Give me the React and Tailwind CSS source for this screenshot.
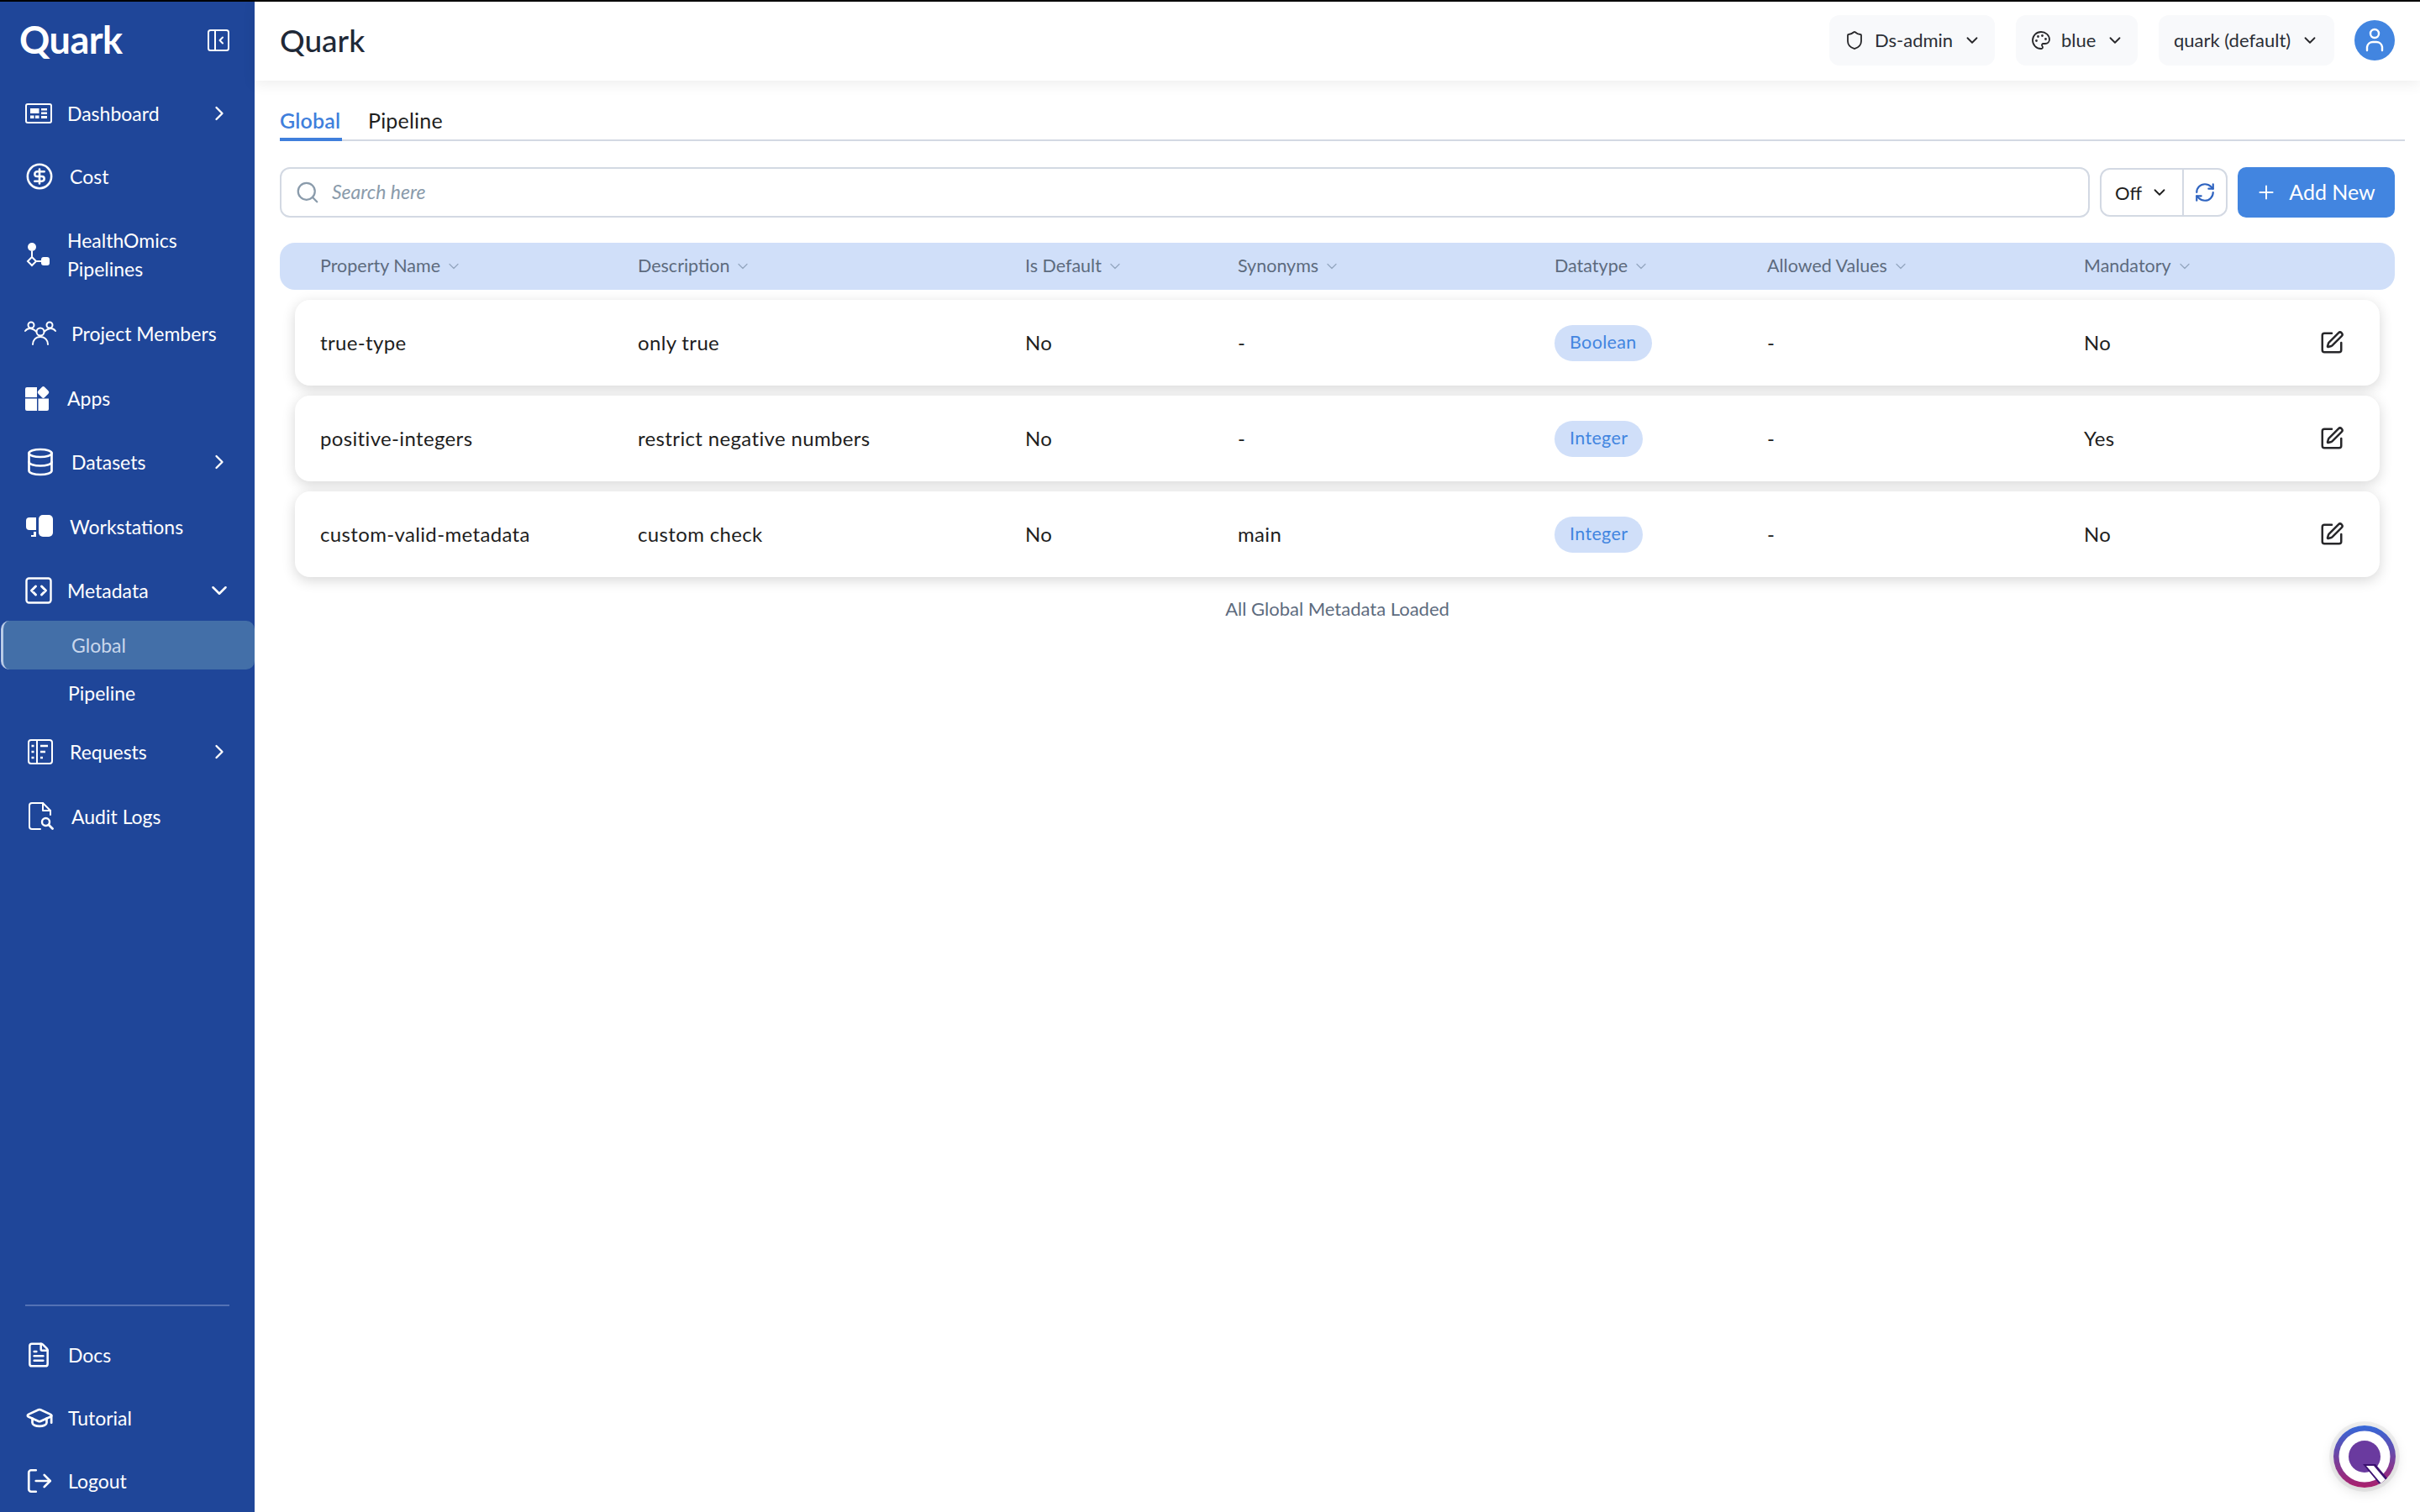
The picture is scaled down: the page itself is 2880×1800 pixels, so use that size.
import {
  ChevronDown, ChevronRight, CircleDollarSign, Database, FileText, GraduationCap, LogOut,
  Palette, Plus, RefreshCw, Search, Shield, SquarePen,
} from 'lucide-react';

const DashboardIcon = () => (
  <svg width="32" height="24" viewBox="0 0 32 24" fill="none" className="text-white">
    <rect x="1" y="1" width="30" height="22" rx="2" stroke="currentColor" strokeWidth="2" />
    <path d="M6 6h10.500v6H6zM6 14.500h4.500v3.500H6zM12 14.500h4.500v3.500H12zM19 6h7v2.500h-7zM19 10.500h7v2.500h-7zM19 15h7v3h-7z" fill="currentColor" />
  </svg>
);

const PipelineIcon = () => (
  <svg width="32" height="32" viewBox="0 0 32 32" fill="none">
    <circle cx="8" cy="7" r="5" fill="white" />
    <path d="M8 12v7M13 24h6" stroke="white" strokeWidth="2" />
    <path d="M8 19l5 5-5 5-5-5z" stroke="white" strokeWidth="2" />
    <rect x="19" y="19" width="10" height="10" rx="3" fill="white" />
  </svg>
);

const MembersIcon = () => (
  <svg width="38" height="30" viewBox="0 0 38 30" fill="none" stroke="white" strokeWidth="2" strokeLinecap="round">
    <circle cx="8" cy="5" r="3.500" />
    <circle cx="30" cy="5" r="3.500" />
    <circle cx="19" cy="13" r="4.500" />
    <path d="M1 12c2-2.500 5-3.500 8-2.500 2 .7 3.500 1.700 5 3M37 12c-2-2.500-5-3.500-8-2.500-2 .7-3.500 1.700-5 3" />
    <path d="M10 28c0-5 3.500-9 9-9s9 4 9 9" />
  </svg>
);

const AppsIcon = () => (
  <svg width="30" height="30" viewBox="0 0 30 30" fill="white">
    <path d="M2 2h12v12H0V4a2 2 0 0 1 2-2zM0 15.500h14V30H2a2 2 0 0 1-2-2zM15.500 15.500H28V28a2 2 0 0 1-2 2H15.500z" />
    <rect x="16" y="2.500" width="11" height="11" rx="2.500" transform="rotate(45 21.500 8)" />
  </svg>
);

const WorkstationIcon = () => (
  <svg width="32" height="28" viewBox="0 0 32 28" fill="white">
    <rect x="15" y="0" width="17" height="26" rx="5" />
    <path d="M4 3h8v15H4a4 4 0 0 1-4-4V7a4 4 0 0 1 4-4z" />
    <rect x="9" y="20" width="3" height="4" />
    <rect x="6" y="24" width="6" height="2" />
  </svg>
);

const MetadataIcon = () => (
  <svg width="32" height="32" viewBox="0 0 32 32" fill="none" stroke="white" strokeWidth="2.400" strokeLinecap="round" strokeLinejoin="round">
    <rect x="1.500" y="1.500" width="29" height="29" rx="3" />
    <path d="M12.500 11l-5 5 5 5M19.500 11l5 5-5 5" strokeWidth="3" />
  </svg>
);

const RequestsIcon = () => (
  <svg width="30" height="30" viewBox="0 0 30 30" fill="none" stroke="white" strokeWidth="2">
    <rect x="1" y="1" width="28" height="28" rx="3" />
    <path d="M11 1v28" />
    <path d="M4.500 8h3M4.500 15h3M4.500 22h3M15 8h9M15 15h6M15 22h3" strokeWidth="2.500" />
  </svg>
);

const AuditIcon = () => (
  <svg width="30" height="34" viewBox="0 0 30 34" fill="none" stroke="white" strokeWidth="2" strokeLinecap="round" strokeLinejoin="round">
    <path d="M14 32H4a3 3 0 0 1-3-3V4a3 3 0 0 1 3-3h13l9 9v5" />
    <path d="M17 1v9h9" />
    <circle cx="20.500" cy="23.500" r="4.500" strokeWidth="2.400" />
    <path d="M24 27l4.500 4.500" strokeWidth="2.800" />
  </svg>
);

const CollapseIcon = () => (
  <svg width="26" height="26" viewBox="0 0 26 26" fill="none" stroke="white" strokeWidth="2" strokeLinecap="round" strokeLinejoin="round">
    <rect x="1" y="1" width="24" height="24" rx="2.500" />
    <path d="M9 1v24" />
    <path d="M18 9.500l-3.500 3.500 3.500 3.500" />
  </svg>
);

const UserIcon = () => (
  <svg width="24" height="32" viewBox="0 0 24 32" fill="none" stroke="white" strokeWidth="2.400" strokeLinecap="round">
    <circle cx="12" cy="8" r="5" />
    <path d="M3 28v-4a7 7 0 0 1 7-6h4a7 7 0 0 1 7 6v4" />
  </svg>
);

const QuarkBubble = () => (
  <svg width="74" height="74" viewBox="0 0 74 74">
    <defs>
      <linearGradient id="qg" x1="0" y1="0" x2="0" y2="1">
        <stop offset="0" stopColor="#3569d9" />
        <stop offset="1" stopColor="#ab1f6c" />
      </linearGradient>
      <clipPath id="qc"><circle cx="37" cy="37" r="37" /></clipPath>
    </defs>
    <circle cx="37" cy="37" r="37" fill="url(#qg)" />
    <circle cx="37" cy="37" r="30.500" fill="white" />
    <circle cx="37" cy="37" r="19" fill="#6a3a9f" />
    <g clipPath="url(#qc)">
      <path d="M35 46h15l20 24h-15z" fill="#3b1170" />
      <path d="M39 48h9l21 25h-9z" fill="white" />
    </g>
  </svg>
);

const NAV_TOP = [
  { label: 'Dashboard', icon: <DashboardIcon />, height: 'h-[76px]', iconBox: 'w-[32px] ml-[30px]', gap: 'ml-[18px]', arrow: true },
  { label: 'Cost', icon: <CircleDollarSign size={34} strokeWidth={1.8} color="white" />, height: 'h-[74px]', iconBox: 'w-[34px] ml-[30px]', gap: 'ml-[19px]' },
  { label: 'HealthOmics Pipelines', icon: <PipelineIcon />, height: 'h-[112px]', iconBox: 'w-[32px] ml-[30px]', gap: 'ml-[18px]' },
  { label: 'Project Members', icon: <MembersIcon />, height: 'h-[76px]', iconBox: 'w-[38px] ml-[29px]', gap: 'ml-[18px]' },
  { label: 'Apps', icon: <AppsIcon />, height: 'h-[78px]', iconBox: 'w-[30px] ml-[30px]', gap: 'ml-[20px]' },
  { label: 'Datasets', icon: <Database size={36} strokeWidth={1.8} color="white" />, height: 'h-[74px]', iconBox: 'w-[36px] ml-[30px]', gap: 'ml-[19px]', arrow: true },
  { label: 'Workstations', icon: <WorkstationIcon />, height: 'h-[79px]', iconBox: 'w-[32px] ml-[31px]', gap: 'ml-[20px]' },
  { label: 'Metadata', icon: <MetadataIcon />, height: 'h-[73px]', iconBox: 'w-[32px] ml-[30px]', gap: 'ml-[18px]', open: true },
];

const NAV_AFTER = [
  { label: 'Requests', icon: <RequestsIcon />, height: 'h-[84px]', iconBox: 'w-[30px] ml-[33px]', gap: 'ml-[20px]', arrow: true },
  { label: 'Audit Logs', icon: <AuditIcon />, height: 'h-[70px]', iconBox: 'w-[30px] ml-[34px]', gap: 'ml-[21px]' },
];

const NAV_BOTTOM = [
  { label: 'Docs', icon: <FileText size={32} strokeWidth={1.9} color="white" />, height: 'h-[75px]', iconBox: 'w-[32px] ml-[30px]', gap: 'ml-[19px]' },
  { label: 'Tutorial', icon: <GraduationCap size={34} strokeWidth={1.9} color="white" />, height: 'h-[75px]', iconBox: 'w-[34px] ml-[30px]', gap: 'ml-[17px]' },
  { label: 'Logout', icon: <LogOut size={34} strokeWidth={1.9} color="white" />, height: 'h-[75px]', iconBox: 'w-[34px] ml-[30px]', gap: 'ml-[17px]' },
];

const COLUMNS = ['Property Name', 'Description', 'Is Default', 'Synonyms', 'Datatype', 'Allowed Values', 'Mandatory'];

const ROWS = [
  { name: 'true-type', description: 'only true', isDefault: 'No', synonyms: '-', datatype: 'Boolean', allowed: '-', mandatory: 'No' },
  { name: 'positive-integers', description: 'restrict negative numbers', isDefault: 'No', synonyms: '-', datatype: 'Integer', allowed: '-', mandatory: 'Yes' },
  { name: 'custom-valid-metadata', description: 'custom check', isDefault: 'No', synonyms: 'main', datatype: 'Integer', allowed: '-', mandatory: 'No' },
];

const GRID = 'grid grid-cols-[378px_461px_253px_377px_253px_377px_1fr] items-center';

function NavItem({ item }) {
  return (
    <div className={`flex items-center shrink-0 text-white text-[23px] leading-[34px] ${item.height}`}>
      <div className={`flex justify-center shrink-0 ${item.iconBox}`}>{item.icon}</div>
      <span className={`w-[150px] grow ${item.gap}`}>{item.label}</span>
      {item.arrow && <ChevronRight size={28} strokeWidth={2} className="mr-[28px] shrink-0" />}
      {item.open && <ChevronDown size={30} strokeWidth={2} className="mr-[27px] shrink-0" />}
    </div>
  );
}

function HeaderPill({ icon, label, className }) {
  return (
    <div className={`flex items-center h-[60px] rounded-[12px] bg-[#f8f9fb] text-[22px] text-[#2b2f36] ${className}`}>
      {icon}
      <span>{label}</span>
      <ChevronDown size={22} strokeWidth={2} className="text-[#27272a]" />
    </div>
  );
}

export default function App() {
  return (
    <div className="flex flex-col w-[2880px] h-[1800px] overflow-hidden bg-white font-['Lato',sans-serif] relative">
      <div className="h-[2px] bg-black shrink-0" />
      <div className="flex grow min-h-0">
        <aside className="flex flex-col w-[303px] shrink-0 bg-[#1f4699]">
          <div className="flex items-center justify-between h-[95px] pl-[23px] pr-[30px] pb-[3px] shrink-0">
            <span className="text-[45px] font-bold text-white tracking-[-0.5px]">Quark</span>
            <CollapseIcon />
          </div>
          {NAV_TOP.map(item => <NavItem key={item.label} item={item} />)}
          <div className="flex items-center h-[58px] shrink-0 ml-[1px] pl-[81px] rounded-[10px] border-l-[3px] border-[#b9cbe6] bg-[#436fa8] text-[23px] text-[#c9d7ec]">
            Global
          </div>
          <div className="flex items-center h-[56px] shrink-0 pl-[81px] text-[23px] text-white">Pipeline</div>
          {NAV_AFTER.map(item => <NavItem key={item.label} item={item} />)}
          <div className="mt-auto">
            <div className="h-[2px] mx-[30px] mb-[20px] bg-[#5472b5]" />
            {NAV_BOTTOM.map(item => <NavItem key={item.label} item={item} />)}
          </div>
        </aside>

        <main className="flex flex-col grow min-w-0">
          <header className="flex items-center justify-between h-[94px] shrink-0 pl-[30px] pr-[30px] pb-[3px] shadow-[0_4px_16px_rgba(0,0,0,0.07)]">
            <h1 className="text-[37px] leading-none font-medium text-[#1f2937]">Quark</h1>
            <div className="flex items-center">
              <HeaderPill
                icon={<Shield size={24} strokeWidth={1.8} className="text-[#27272a]" />}
                label="Ds-admin"
                className="w-[197px] pl-[18px] gap-[12px]"
              />
              <HeaderPill
                icon={<Palette size={24} strokeWidth={1.8} className="text-[#27272a]" />}
                label="blue"
                className="w-[145px] ml-[25px] pl-[18px] gap-[12px]"
              />
              <HeaderPill label="quark (default)" className="w-[209px] ml-[25px] pl-[18px] gap-[12px]" />
              <div className="flex items-center justify-center w-[48px] h-[48px] ml-[24px] rounded-full bg-[#4285e0]">
                <UserIcon />
              </div>
            </div>
          </header>

          <div className="flex items-end gap-[31px] h-[72px] shrink-0 ml-[30px] mr-[18px] border-b-2 border-[#d3d9e3] text-[25px] tracking-[0.2px]">
            <div className="flex items-center w-[74px] h-[45px] -mb-[2px] border-b-4 border-[#3f7fdc] text-[#3f7fdc] font-semibold">Global</div>
            <div className="flex items-center h-[45px] -mb-[2px] border-b-4 border-transparent text-[#1e1e1e]">Pipeline</div>
          </div>

          <div className="flex flex-col grow mx-[30px] min-h-0">
            <div className="flex items-center mt-[31px] shrink-0">
              <div className="flex items-center grow h-[60px] pl-[16px] pb-[1px] rounded-[12px] border-2 border-[#d3d9e3]">
                <Search size={30} strokeWidth={1.8} className="text-[#8a9bab]" />
                <span className="ml-[14px] text-[23px] italic text-[#8a9bab]">Search here</span>
              </div>
              <div className="flex items-center h-[58px] ml-[12px] w-[152px] shrink-0 rounded-[12px] border-2 border-[#d3d9e3]">
                <div className="flex items-center w-[98px] h-full pl-[16px] gap-[10px] border-r-2 border-[#d3d9e3] text-[22px] text-[#1e1e1e]">
                  Off
                  <ChevronDown size={22} strokeWidth={2} />
                </div>
                <div className="flex items-center justify-center grow">
                  <RefreshCw size={26} strokeWidth={2} className="text-[#2e63c0]" />
                </div>
              </div>
              <button type="button" className="flex items-center justify-center gap-[14px] w-[187px] h-[60px] ml-[12px] pr-[2px] shrink-0 rounded-[10px] bg-[#4285e0] text-[25px] text-white">
                <Plus size={26} strokeWidth={1.8} />
                Add New
              </button>
            </div>

            <div className={`${GRID} h-[56px] mt-[30px] pl-[48px] pb-[1px] shrink-0 rounded-[18px] bg-[#d0dff9] text-[21.5px] text-[#5d6b7e]`}>
              {COLUMNS.map(col => (
                <div key={col} className="flex items-center gap-[6px]">
                  {col}
                  <ChevronDown size={20} strokeWidth={1.5} className="text-[#94a7c0]" />
                </div>
              ))}
            </div>

            <div className="flex flex-col gap-[12px] mt-[12px] mx-[18px]">
              {ROWS.map(row => (
                <div key={row.name} className={`${GRID} h-[102px] pl-[30px] rounded-[18px] bg-white text-[24px] tracking-[0.35px] text-[#1e1e1e] shadow-[0_4px_16px_rgba(0,0,0,0.16)]`}>
                  <div>{row.name}</div>
                  <div>{row.description}</div>
                  <div>{row.isDefault}</div>
                  <div>{row.synonyms}</div>
                  <div>
                    <span className="inline-flex items-center h-[43px] px-[18px] pb-[1px] rounded-full bg-[#d0dff9] text-[21.5px] text-[#4285e0]">{row.datatype}</span>
                  </div>
                  <div>{row.allowed}</div>
                  <div className="flex items-center justify-between pr-[42px]">
                    <span>{row.mandatory}</span>
                    <SquarePen size={30} strokeWidth={2} className="text-[#27272a]" />
                  </div>
                </div>
              ))}
            </div>

            <p className="mt-[24px] text-center text-[22px] leading-[28px] text-[#5d6b7e]">All Global Metadata Loaded</p>
          </div>
        </main>
      </div>

      <div className="absolute right-[29px] bottom-[29px] rounded-full shadow-[0_0_0_5px_rgba(0,0,0,0.05),0_4px_16px_rgba(0,0,0,0.15)]">
        <QuarkBubble />
      </div>
    </div>
  );
}
